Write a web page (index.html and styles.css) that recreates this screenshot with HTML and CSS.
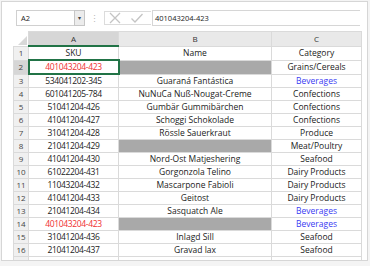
FILE: index.html
```html
<!DOCTYPE html>
<html lang="en">
<head>
  <meta charset="UTF-8">
  <title>Spreadsheet</title>
  <link rel="stylesheet" href="styles.css">
</head>
<body>
  <div class="panel">
    <div class="toolbar">
      <div class="name-box">A2</div>
      <div class="name-drop">&#9662;</div>
      <div class="grip">&#8942;</div>
      <div class="actions">
        <svg width="14" height="12" viewBox="0 0 14 12"><path d="M2 1 L12 11 M12 1 L2 11" stroke="#c4c4c4" stroke-width="1.3" fill="none"/></svg>
        <svg width="14" height="12" viewBox="0 0 14 12"><path d="M1.5 6.5 L5 10 L12.5 2" stroke="#c4c4c4" stroke-width="1.3" fill="none"/></svg>
      </div>
      <div class="formula">401043204-423</div>
    </div>

    <table class="sheet">
      <colgroup>
        <col class="c-row">
        <col class="c-a">
        <col class="c-b">
        <col class="c-c">
      </colgroup>
      <tr class="col-head">
        <th class="corner"><span class="tri"></span></th>
        <th class="sel-col">A</th>
        <th>B</th>
        <th>C</th>
      </tr>
      <tr><th>1</th><td>SKU</td><td>Name</td><td>Category</td></tr>
      <tr><th class="sel-row">2</th><td class="sku active red">401043204-423</td><td class="blank"></td><td>Grains/Cereals</td></tr>
      <tr><th>3</th><td class="sku">534041202-345</td><td>Guaraná Fantástica</td><td class="blue">Beverages</td></tr>
      <tr><th>4</th><td class="sku">601041205-784</td><td>NuNuCa Nuß-Nougat-Creme</td><td>Confections</td></tr>
      <tr><th>5</th><td class="sku">51041204-426</td><td>Gumbär Gummibärchen</td><td>Confections</td></tr>
      <tr><th>6</th><td class="sku">41041204-427</td><td>Schoggi Schokolade</td><td>Confections</td></tr>
      <tr><th>7</th><td class="sku">31041204-428</td><td>Rössle Sauerkraut</td><td>Produce</td></tr>
      <tr><th>8</th><td class="sku">21041204-429</td><td class="blank"></td><td>Meat/Poultry</td></tr>
      <tr><th>9</th><td class="sku">41041204-430</td><td>Nord-Ost Matjeshering</td><td>Seafood</td></tr>
      <tr><th>10</th><td class="sku">61022204-431</td><td>Gorgonzola Telino</td><td>Dairy Products</td></tr>
      <tr><th>11</th><td class="sku">11043204-432</td><td>Mascarpone Fabioli</td><td>Dairy Products</td></tr>
      <tr><th>12</th><td class="sku">41041204-433</td><td>Geitost</td><td>Dairy Products</td></tr>
      <tr><th>13</th><td class="sku">21041204-434</td><td>Sasquatch Ale</td><td class="blue">Beverages</td></tr>
      <tr><th>14</th><td class="sku red">401043204-423</td><td class="blank"></td><td class="blue">Beverages</td></tr>
      <tr><th>15</th><td class="sku">31041204-436</td><td>Inlagd Sill</td><td>Seafood</td></tr>
      <tr><th>16</th><td class="sku">21041204-437</td><td>Gravad lax</td><td>Seafood</td></tr>
      <tr class="tail"><th></th><td></td><td></td><td></td></tr>
    </table>
  </div>
</body>
</html>
```

FILE: styles.css
```css
body {
  margin: 0;
  background-color: #f4f4f4;
  font-family: "Open Sans", "Noto Sans", sans-serif;
  font-size: 8.5px;
  color: #222;
}

.panel {
  margin: 1px 2px 0 1px;
  height: 260px;
  background-color: white;
  border: 1px solid #d6d6d6;
  box-sizing: border-box;
  overflow: hidden;
}

.toolbar {
  display: flex;
  align-items: center;
  height: 16px;
  margin: 8px 0 0 14px;
}

.name-box {
  width: 53px;
  height: 14px;
  line-height: 14px;
  padding-left: 4px;
  border: 1px solid #d0d0d0;
  border-right: none;
  font-size: 7.5px;
}

.name-drop {
  width: 9px;
  height: 14px;
  line-height: 14px;
  border: 1px solid #c6c6c6;
  background-color: #ececec;
  color: #444;
  font-size: 6px;
  text-align: center;
}

.grip {
  width: 19px;
  text-align: center;
  color: #b8b8b8;
  font-size: 9px;
}

.actions {
  display: flex;
  align-items: center;
  gap: 8px;
  width: 47px;
  height: 14px;
  padding-left: 3px;
  box-sizing: border-box;
  border: 1px solid #dcdcdc;
  border-right: none;
}

.formula {
  flex: 1;
  margin-right: 7px;
  margin-left: 1px;
  height: 14px;
  line-height: 14px;
  padding-left: 2px;
  border-top: 1px solid #d6d6d6;
  border-bottom: 1px solid #d6d6d6;
  border-left: 1px solid #d6d6d6;
  font-size: 7.5px;
}

.sheet {
  margin: 5px 0 0 11px;
  border-collapse: collapse;
  table-layout: fixed;
  width: 348px;
}

.c-row { width: 15px; }
.c-a { width: 90px; }
.c-b { width: 153px; }
.c-c { width: 90px; }

.sheet th,
.sheet td {
  height: 12px;
  padding: 0;
  border: 1px solid #dadada;
  text-align: center;
  white-space: nowrap;
  overflow: hidden;
  line-height: 12px;
}

.sheet th {
  background-color: #f0f0f0;
  color: #444;
  font-weight: normal;
  font-size: 8px;
}

.sheet .sku {
  letter-spacing: -0.35px;
}

.col-head th {
  height: 13px;
  background-color: #e9e9e9;
  color: #333;
}

.col-head .corner {
  position: relative;
  background-color: white;
  border-top-color: white;
  border-left-color: white;
}

.tri {
  position: absolute;
  right: 1px;
  bottom: 1px;
  border-left: 9px solid transparent;
  border-bottom: 9px solid #d8d8d8;
}

.col-head .sel-col {
  background-color: #d6d6d6;
  border-bottom: 2px solid #217346;
}

.sheet .sel-row {
  background-color: #d6d6d6;
  border-right: 2px solid #217346;
}

.sheet .active {
  position: relative;
  border: 2px solid #217346;
}

.sheet .active::after {
  content: "";
  position: absolute;
  right: -3px;
  bottom: -3px;
  width: 4px;
  height: 4px;
  background-color: #217346;
  border: 1px solid white;
  box-sizing: border-box;
}

.sheet .blank {
  background-color: #a9a9a9;
}

.red {
  color: #f03030;
}

.blue {
  color: #3a3af2;
}

.tail th,
.tail td {
  height: 4px;
  border-bottom: none;
}
```
